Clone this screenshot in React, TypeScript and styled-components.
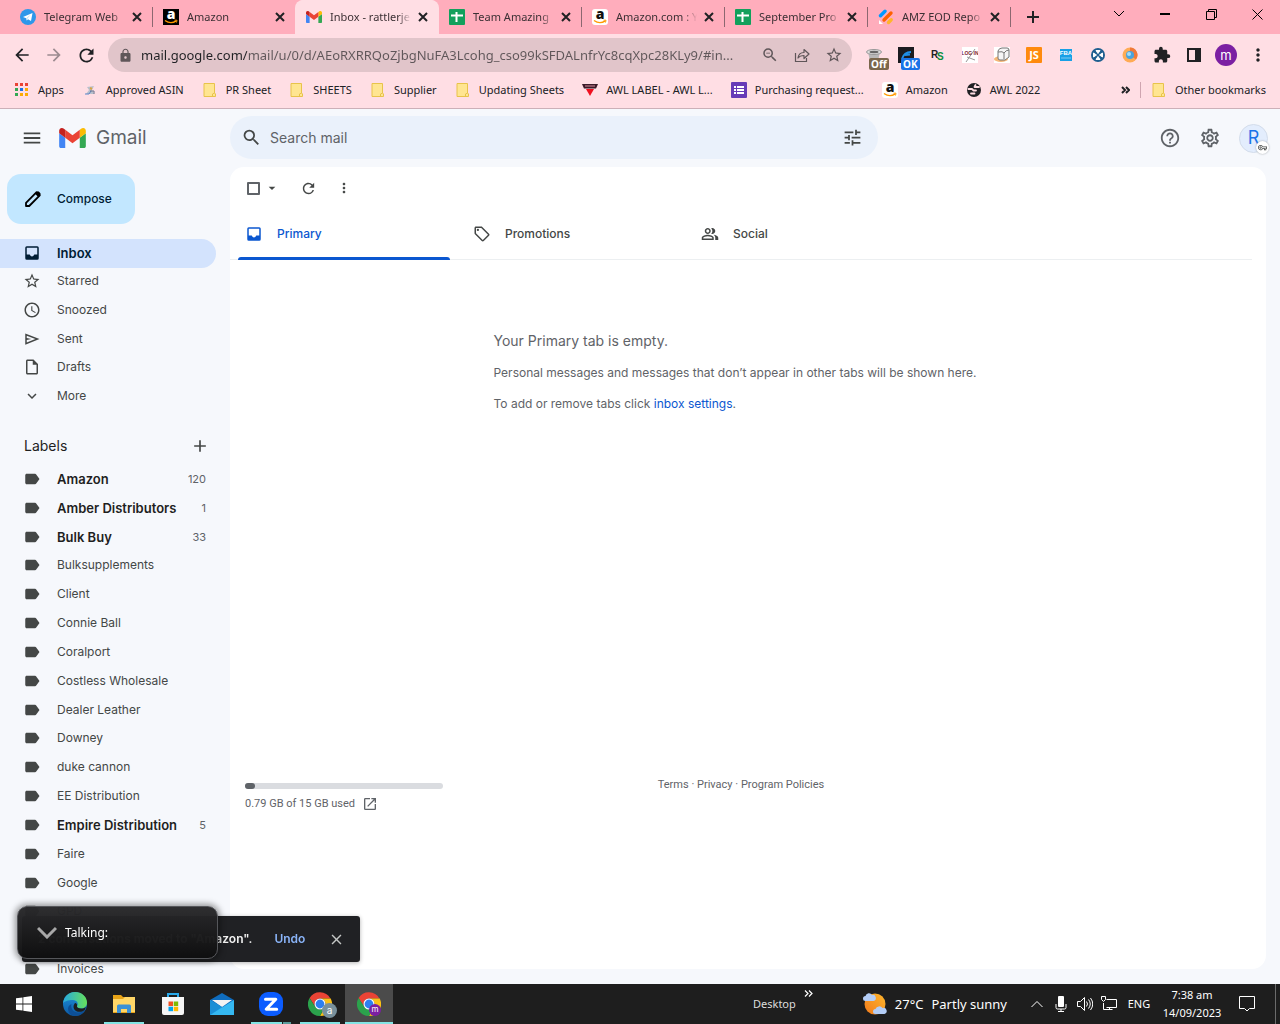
import React from "react";
import styled, { createGlobalStyle, css } from "styled-components";
import {
  MdAccessTime, MdAdd, MdArrowBack, MdArrowDropDown, MdArrowForward, MdClose, MdExpandMore,
  MdExtension, MdHelpOutline, MdLock, MdMenu, MdMoreVert, MdOpenInNew,
  MdOutlineInsertDriveFile, MdOutlineLocalOffer, MdOutlinePeopleAlt,
  MdOutlineSettings, MdOutlineVpnKey, MdRefresh, MdSearch, MdStarBorder, MdTune, MdZoomOut,
} from "react-icons/md";

const ui = `"Noto Sans", "Open Sans", sans-serif`;
const mail = `Inter, Roboto, sans-serif`;

const GlobalStyle = createGlobalStyle`
  *, *::before, *::after { box-sizing: border-box; }
  body { margin: 0; background: #f6f8fc; font-family: ${mail}; }
  button { border: 0; margin: 0; padding: 0; background: none; font: inherit; color: inherit; cursor: pointer; }
  a { color: inherit; text-decoration: none; }
  ul { list-style: none; margin: 0; padding: 0; }
  svg { display: block; flex: none; }
`;

const Page = styled.div`
  display: flex;
  flex-direction: column;
  min-height: 100vh;
`;

/* ---------- browser ---------- */

const TabStrip = styled.div`
  display: flex;
  height: 34px;
  padding-left: 10px;
  background: #ffadbc;
  font: 11px/16px ${ui};
  color: #3c3034;
`;

const Tab = styled.div<{ $active?: boolean }>`
  flex: 0 1 142px;
  min-width: 60px;
  display: flex;
  align-items: center;
  gap: 8px;
  padding: 0 7px 0 10px;
  ${(p) => p.$active && css`
    background: #ffdee4;
    border-radius: 8px 8px 0 0;
    box-shadow: -1px 0 #ffdee4, 1px 0 #ffdee4;
  `}
`;

const TabTitle = styled.button`
  flex: 1;
  min-width: 0;
  overflow: hidden;
  white-space: nowrap;
  text-align: left;
  mask-image: linear-gradient(to right, #000 84%, transparent);
`;

const TabClose = styled.button`
  display: grid;
  place-items: center;
  width: 16px;
  height: 16px;
  margin-left: -4px;
  color: #202124;
`;

const TabDivider = styled.span<{ $hidden?: boolean }>`
  width: 1px;
  height: 20px;
  align-self: center;
  background: ${(p) => (p.$hidden ? "transparent" : "#8c6770")};
`;

const NewTab = styled.button`
  display: grid;
  place-items: center;
  width: 28px;
  margin-left: 8px;
  color: #202124;
`;

const WindowControls = styled.div`
  display: flex;
  margin-left: auto;
`;

const WindowButton = styled.button`
  display: grid;
  place-items: center;
  width: 46px;
  height: 28px;
  color: #000;
`;

const Toolbar = styled.div`
  display: flex;
  align-items: center;
  height: 38px;
  padding: 4px 6px 0;
  background: #ffdee4;
  color: #202124;
`;

const ToolButton = styled.button<{ $muted?: boolean }>`
  position: relative;
  flex: none;
  display: grid;
  place-items: center;
  width: 32px;
  height: 32px;
  color: ${(p) => (p.$muted ? "#9c8b90" : "inherit")};
`;

const Omnibox = styled.div`
  flex: 1;
  min-width: 0;
  display: flex;
  align-items: center;
  height: 34px;
  margin: 0 6px;
  padding: 0 2px 0 10px;
  border-radius: 17px;
  background: #e1c5ca;
  color: #5f5659;
`;

const UrlInput = styled.input`
  flex: 1;
  min-width: 0;
  margin-left: 8px;
  padding: 0;
  border: 0;
  outline: 0;
  font: 13px/24px ${ui};
  color: transparent;
  background: linear-gradient(to right, #202124 106px, #5f5659 106px);
  background-clip: text;
`;

const Tag = styled.span<{ $color: string }>`
  position: absolute;
  left: 11px;
  bottom: 1px;
  padding: 0 2px;
  border-radius: 2px;
  background: ${(p) => p.$color};
  color: #fff;
  font: 700 10px/12px ${ui};
`;

const Profile = styled.span`
  display: grid;
  place-items: center;
  width: 22px;
  height: 22px;
  border-radius: 50%;
  background: #7b1fa2;
  color: #fff;
  font: 13px/20px ${mail};
`;

const Bookmarks = styled.nav`
  display: flex;
  align-items: center;
  gap: 18px;
  height: 37px;
  padding: 0 14px;
  border-bottom: 1px solid #ccb0b8;
  background: #ffdee4;
  color: #202124;
  font: 11px/16px ${ui};
  white-space: nowrap;
`;

const Bookmark = styled.a`
  display: flex;
  align-items: center;
  gap: 8px;
`;

const BookmarksEnd = styled.div`
  display: flex;
  align-items: center;
  gap: 10px;
  margin-left: auto;
`;

const EndDivider = styled.span`
  width: 1px;
  height: 16px;
  background: #cfa5b0;
`;

/* ---------- mail ---------- */

const Mail = styled.div`
  flex: 1;
  display: grid;
  grid-template-columns: 230px minmax(0, 1fr);
  grid-template-rows: 58px minmax(0, 1fr);
  background: #f6f8fc;
`;

const Brand = styled.div`
  display: flex;
  align-items: center;
  padding-left: 21px;
  color: #444746;
`;

const MenuButton = styled.button`
  margin-right: 16px;
`;

const Logo = styled.a`
  display: flex;
  align-items: center;
  gap: 10px;
  color: #5f6368;
  font: 19px/24px ${mail};
`;

const Header = styled.header`
  display: flex;
  align-items: center;
  padding-right: 12px;
  color: #5f6368;
`;

const SearchBox = styled.form`
  flex: 0 1 648px;
  display: flex;
  align-items: center;
  gap: 8px;
  height: 43px;
  margin: 0 auto 1px 0;
  padding: 0 15px 0 11px;
  border-radius: 22px;
  background: #eaf1fb;
  color: #444746;
`;

const SearchInput = styled.input`
  flex: 1;
  min-width: 0;
  padding: 0;
  border: 0;
  outline: 0;
  background: none;
  color: #444746;
  font: 14px/24px ${mail};
  &::placeholder { color: #5f6368; opacity: 1; }
`;

const HeaderButton = styled.button`
  display: grid;
  place-items: center;
  width: 40px;
  height: 40px;
`;

const Avatar = styled.button`
  position: relative;
  width: 29px;
  height: 29px;
  margin-left: 9px;
  border: 1px solid #d3dcea;
  border-radius: 50%;
  background: #e3edfd;
  color: #1a73e8;
  font: 18px/26px ${mail};
`;

const KeyBadge = styled.span`
  position: absolute;
  right: -2px;
  bottom: -2px;
  display: grid;
  place-items: center;
  width: 13px;
  height: 13px;
  border-radius: 50%;
  background: #fff;
  box-shadow: 0 0 2px #9aa0a6;
  color: #444746;
`;

const Sidebar = styled.aside`
  display: flex;
  flex-direction: column;
  min-width: 0;
  padding-top: 7px;
`;

const Compose = styled.button`
  display: flex;
  align-items: center;
  align-self: flex-start;
  gap: 14px;
  height: 50px;
  margin: 0 0 15px 7px;
  padding: 0 23px 0 16px;
  border-radius: 14px;
  background: #c2e7ff;
  color: #001d35;
  font: 500 12px/20px ${mail};
`;

const NavList = styled.ul`
  display: grid;
  grid-auto-rows: 1fr;
  height: 172px;
`;

const LabelList = styled.ul`
  flex: 1;
  display: grid;
  grid-auto-rows: minmax(28px, 1fr);
`;

const NavItem = styled.a<{ $active?: boolean; $bold?: boolean }>`
  display: flex;
  align-items: center;
  gap: 16px;
  height: 100%;
  margin-right: 14px;
  padding: 0 10px 1px 23px;
  border-radius: 0 15px 15px 0;
  background: ${(p) => (p.$active ? "#d3e3fd" : "none")};
  color: ${(p) => (p.$active ? "#001d35" : p.$bold ? "#1f1f1f" : "#444746")};
  font: ${(p) => (p.$active || p.$bold ? "600 13px" : "400 12px")}/18px ${mail};
  svg { color: ${(p) => (p.$active ? "#001d35" : "#444746")}; }
`;

const Count = styled.span`
  margin-left: auto;
  color: #5f6368;
  font: 400 11px/16px ${mail};
`;

const LabelsHead = styled.div`
  display: flex;
  align-items: center;
  justify-content: space-between;
  height: 54px;
  padding: 16px 20px 0 24px;
  color: #444746;
`;

const LabelsTitle = styled.h2`
  margin: 0;
  color: #1f1f1f;
  font: 400 14px/20px ${mail};
`;

const Card = styled.main`
  display: flex;
  flex-direction: column;
  margin: 0 14px 15px 0;
  padding-right: 14px;
  border-radius: 14px;
  background: #fff;
`;

const Actions = styled.div`
  display: flex;
  align-items: center;
  height: 42px;
  padding-left: 17px;
  color: #444746;
`;

const Checkbox = styled.input`
  appearance: none;
  width: 13px;
  height: 13px;
  margin: 0;
  border: 2px solid #5f6368;
  border-radius: 1px;
`;

const ActionButton = styled.button<{ $gap?: number }>`
  display: grid;
  place-items: center;
  width: 16px;
  height: 16px;
  margin-left: ${(p) => p.$gap || 4}px;
`;

const TabBar = styled.div`
  display: grid;
  grid-template-columns: repeat(3, minmax(0, 228px));
  height: 51px;
  border-bottom: 1px solid #eceff1;
`;

const Category = styled.button<{ $active?: boolean }>`
  position: relative;
  display: flex;
  align-items: center;
  gap: 14px;
  height: 51px;
  padding: 0 0 2px 15px;
  color: ${(p) => (p.$active ? "#0b57d0" : "#444746")};
  font: 500 12px/18px ${mail};
  &::after {
    content: "";
    display: ${(p) => (p.$active ? "block" : "none")};
    position: absolute;
    left: 8px;
    right: 8px;
    bottom: 0;
    height: 3px;
    border-radius: 3px 3px 0 0;
    background: #0b57d0;
  }
`;

const Empty = styled.section`
  align-self: center;
  padding: 69px 12px 0 0;
  color: #5f6368;
`;

const EmptyTitle = styled.h1`
  margin: 0 0 10px;
  font: 400 14px/24px ${mail};
`;

const EmptyText = styled.p`
  margin: 0 0 11px;
  font: 12px/20px ${mail};
  a { color: #0b57d0; }
`;

const Footer = styled.footer`
  display: grid;
  grid-template-columns: 1fr auto 1fr;
  margin: auto 0 157px;
  padding: 0 15px;
  color: #5f6368;
  font: 11px/16px Roboto, sans-serif;
`;

const Storage = styled.div`
  max-width: 198px;
  padding-top: 6px;
`;

const Meter = styled.div`
  height: 6px;
  border-radius: 3px;
  background: #dadce0;
`;

const MeterFill = styled.div`
  height: 6px;
  border-radius: 3px;
  background: #5f6368;
`;

const StorageText = styled.a`
  display: flex;
  align-items: center;
  gap: 7px;
  padding-top: 7px;
`;

/* ---------- overlays ---------- */

const Toast = styled.div`
  position: fixed;
  left: 22px;
  bottom: 62px;
  display: flex;
  align-items: center;
  height: 46px;
  padding: 0 15px 0 16px;
  border-radius: 3px;
  background: #202124;
  box-shadow: 0 1px 4px rgba(0, 0, 0, 0.3);
  color: #f2f2f2;
  font: 600 12px/18px ${mail};
`;

const ToastAction = styled.button`
  margin-left: 22px;
  color: #8ab4f8;
`;

const ToastClose = styled.button`
  margin-left: 23px;
  color: #c4c7c5;
`;

const Talking = styled.div`
  position: fixed;
  left: 17px;
  bottom: 65px;
  display: flex;
  align-items: center;
  gap: 8px;
  width: 201px;
  height: 53px;
  padding-left: 19px;
  border: 1px solid #55565a;
  border-radius: 10px;
  background: linear-gradient(rgba(42, 42, 44, 0.98), rgba(15, 15, 16, 0.98));
  box-shadow: 0 0 6px 2px rgba(0, 0, 0, 0.4);
  color: #fff;
  font: 12px/18px ${ui};
  svg { color: #a8a8a8; }
`;

/* ---------- taskbar ---------- */

const Taskbar = styled.div`
  display: flex;
  height: 40px;
  background: #1e1e1e;
  color: #fff;
  font: 11px/18px ${ui};
`;

const Apps = styled.div`
  display: flex;
  gap: 1px;
`;

const TaskButton = styled.button<{ $running?: boolean; $active?: boolean; $stacked?: boolean }>`
  position: relative;
  display: grid;
  place-items: center;
  width: 48px;
  background: ${(p) => (p.$active ? "#4b4b4b" : "none")};
  &:first-child { margin-right: 2px; }
  &::after {
    content: "";
    display: ${(p) => (p.$running || p.$active ? "block" : "none")};
    position: absolute;
    left: ${(p) => (p.$active ? 0 : 4)}px;
    right: ${(p) => (p.$active ? 0 : 4)}px;
    bottom: 0;
    height: 2px;
    background: ${(p) =>
      p.$stacked ? "linear-gradient(to right, #83e4e4 31px, #1e1e1e 31px 32px, #5a9c9c 32px)" : "#83e4e4"};
  }
`;

const AppBadge = styled.span<{ $color: string; $small?: boolean }>`
  position: absolute;
  right: ${(p) => (p.$small ? 12 : 7)}px;
  bottom: ${(p) => (p.$small ? 8 : 6)}px;
  width: ${(p) => (p.$small ? 12 : 15)}px;
  height: ${(p) => (p.$small ? 12 : 15)}px;
  border-radius: 50%;
  background: ${(p) => p.$color};
  color: #fff;
  font: ${(p) => (p.$small ? "8px/11px" : "10px/14px")} ${mail};
  text-align: center;
`;

const Tray = styled.div`
  display: flex;
  align-items: stretch;
  margin-left: auto;
`;

const DesktopButton = styled.button`
  display: flex;
  align-items: center;
  gap: 8px;
  margin-right: 50px;
  color: #ddd;
`;

const Chevrons = styled.svg`
  align-self: flex-start;
  margin-top: 6px;
`;

const Weather = styled.button`
  display: flex;
  align-items: center;
  gap: 8px;
  margin-right: 18px;
  font-size: 13px;
`;

const TrayItem = styled.button<{ $w: number }>`
  display: grid;
  place-content: center;
  width: ${(p) => p.$w}px;
  text-align: center;
`;

const ShowDesktop = styled.button`
  width: 5px;
  margin-left: 8px;
  border-left: 1px solid #6b6b6b;
`;

/* ---------- drawings ---------- */

const Glyph = ({ d }: { d: string }) => (
  <svg width="18" height="18" viewBox="0 0 24 24" fill="currentColor" fillRule="evenodd" aria-hidden>
    <path d={d} />
  </svg>
);

const InboxIcon = () => (
  <Glyph d="M5 3h14a2 2 0 0 1 2 2v14a2 2 0 0 1-2 2H5a2 2 0 0 1-2-2V5a2 2 0 0 1 2-2zm0 2v9h4q1 2.500 3 2.500t3-2.500h4V5z" />
);
const SentIcon = () => <Glyph d="M3 4.500v15l19-7.500zM5 7.500 16.500 12 5 16.500V13.300l6-1.300-6-1.300z" />;
const LabelIcon = () => (
  <Glyph d="M17.630 5.840C17.270 5.330 16.670 5 16 5H5c-1.100 0-2 .9-2 2v10c0 1.100.9 2 2 2h11c.670 0 1.270-.330 1.630-.840L22 12z" />
);

const GmailMark = ({ size }: { size: number }) => (
  <svg width={size} height={Math.round(size * 0.75)} viewBox="52 42 88 66" aria-hidden>
    <path fill="#4285f4" d="M58 108h14V74L52 59v43c0 3.32 2.69 6 6 6" />
    <path fill="#34a853" d="M120 108h14c3.32 0 6-2.69 6-6V59l-20 15" />
    <path fill="#fbbc04" d="M120 48v26l20-15v-8c0-7.42-8.47-11.65-14.4-7.2" />
    <path fill="#ea4335" d="M72 74V48l24 18 24-18v26L96 92" />
    <path fill="#c5221f" d="M52 51v8l20 15V48l-5.6-4.2c-5.94-4.45-14.4-.22-14.4 7.2" />
  </svg>
);

const Telegram = () => (
  <svg width="16" height="16" viewBox="0 0 16 16" aria-hidden>
    <circle cx="8" cy="8" r="8" fill="#2e97ea" />
    <path d="M3 8 12.5 4 11 12 8 10.2 6.8 11.6 6.2 9.2Z" fill="#fff" />
    <path d="m6.2 9.2 4.3-3.4-3 3.7-.7 2.1Z" fill="#b9dcf8" />
  </svg>
);

const AmazonMark = ({ dark }: { dark?: boolean }) => (
  <svg width="16" height="16" viewBox="0 0 16 16" aria-hidden>
    <rect width="16" height="16" rx={dark ? 0 : 3} fill={dark ? "#000" : "#fff"} />
    <text x="8" y="10" textAnchor="middle" fontFamily="Open Sans, sans-serif" fontWeight="800" fontSize="14" fill={dark ? "#fff" : "#111"}>a</text>
    <path d="M2 11.5q5.5 4 11 .6" fill="none" stroke="#f90" strokeWidth="1.4" />
    <path d="M11.5 11.2h2.5l-.5 2.3" fill="none" stroke="#f90" strokeWidth="1" />
  </svg>
);

const Sheets = () => (
  <svg width="16" height="16" viewBox="0 0 16 16" aria-hidden>
    <rect width="16" height="16" rx="1" fill="#12a05c" />
    <path d="M2 5.5h12v2H8.5V13h-2V7.5H2zM6.500 3h2v3h-2z" fill="#fff" />
  </svg>
);

const Jotform = () => (
  <svg width="16" height="16" viewBox="0 0 16 16" aria-hidden>
    <g fill="none" strokeLinecap="round" strokeWidth="3.400">
      <path d="M2.500 6.800 7 2.300" stroke="#0099ff" />
      <path d="m6 11 7-7" stroke="#ff6100" />
      <path d="m10.500 13.500 2.700-2.700" stroke="#ffb629" />
    </g>
    <path d="M1 11v4h4z" fill="#fff" />
  </svg>
);

const Folder = () => (
  <svg width="16" height="16" viewBox="0 0 16 16" aria-hidden>
    <path d="M2 1.500h10.500v9.500l1 1v2.500H2z" fill="#ffe591" stroke="#e8c34a" />
    <path d="M10.500 14.500V12l2-1" fill="none" stroke="#e8c34a" />
  </svg>
);

const AppsGrid = () => (
  <svg width="16" height="16" viewBox="0 0 16 16" aria-hidden>
    {["#ea4335", "#ea4335", "#ea4335", "#34a853", "#1a73e8", "#fbab04", "#34a853", "#fbab04", "#fbab04"].map((c, i) => (
      <rect key={i} x={1 + (i % 3) * 5} y={1 + Math.floor(i / 3) * 5} width="3" height="3" fill={c} />
    ))}
  </svg>
);

const Asin = () => (
  <svg width="16" height="16" viewBox="0 0 16 16" aria-hidden>
    <path d="m5 5 7-1-2 4 2 4H4l3-4z" fill="#b9c0cc" />
    <path d="M3 12h4l2-3" fill="none" stroke="#5a86c8" />
    <path d="m8 6 2 1" stroke="#d9a441" strokeWidth="2" />
    <path d="M8 9h4v3" fill="none" stroke="#66718a" />
  </svg>
);

const Awl = () => (
  <svg width="16" height="16" viewBox="0 0 16 16" aria-hidden>
    <path d="M0 2h16l-2 4.500H2z" fill="#3b1a28" />
    <path d="M3 4h10" stroke="#d88a9a" />
    <path d="M4 7h8l-4 7z" fill="#f01020" />
  </svg>
);

const Forms = () => (
  <svg width="16" height="16" viewBox="0 0 16 16" aria-hidden>
    <rect width="16" height="16" rx="1" fill="#673ab7" />
    <path d="M3 4h2v2H3zM3 7h2v2H3zM3 10h2v2H3zM6 4h7v2H6zM6 7h7v2H6zM6 10h7v2H6z" fill="#fff" />
  </svg>
);

const Globe = () => (
  <svg width="16" height="16" viewBox="0 0 16 16" aria-hidden>
    <circle cx="8" cy="8" r="7" fill="#202124" />
    <path d="M2.500 7h3.500l1.500 1.500h2.500M9.500 3 8.500 5H13M5 11.500h3.500" fill="none" stroke="#ffdee4" strokeWidth="1.800" strokeLinecap="round" strokeLinejoin="round" />
  </svg>
);

const Share = () => (
  <svg width="16" height="16" viewBox="0 0 16 16" fill="none" stroke="currentColor" strokeWidth="1.200" aria-hidden>
    <path d="M1.500 6v8.500h11V11" />
    <path d="M4 11c.5-4 3-5.500 6-5.500V2.500l5 4.500-5 4.500v-3C7.500 8.500 5.500 9 4 11Z" strokeLinejoin="round" />
  </svg>
);

const Bucket = () => (
  <svg width="16" height="16" viewBox="0 0 16 16" aria-hidden>
    <path d="M2 5h12l-2 9H4z" fill="#b8b8b8" />
    <ellipse cx="8" cy="5" rx="7.500" ry="2.500" fill="#ddd" stroke="#999" />
    <ellipse cx="8" cy="5" rx="4.500" ry="1.200" fill="#666" />
  </svg>
);

const DarkE = () => (
  <svg width="16" height="16" viewBox="0 0 16 16" aria-hidden>
    <rect width="16" height="16" fill="#1b1b20" />
    <path d="M4 12q2-7 9-7M7 8l5-.5" fill="none" stroke="#1f8fe8" strokeWidth="2" />
  </svg>
);

const RevSeller = () => (
  <svg width="16" height="16" viewBox="0 0 16 16" fontFamily="Liberation Sans, sans-serif" fontWeight="700" aria-hidden>
    <text x="1" y="11" fontSize="10" fill="#222">R</text>
    <text x="7" y="13" fontSize="10" fill="#0a8f3c">S</text>
  </svg>
);

const LogIn = () => (
  <svg width="16" height="16" viewBox="0 0 16 16" aria-hidden>
    <rect width="16" height="16" fill="#fff" />
    <path d="m4 15 9-13M5 10l8 3" stroke="#999" />
    <text x="8" y="8" textAnchor="middle" fontSize="5" fontWeight="700" fontFamily="Liberation Sans, sans-serif" fill="#7b2330">LOG IN</text>
  </svg>
);

const Box = () => (
  <svg width="16" height="16" viewBox="0 0 16 16" aria-hidden>
    <rect width="16" height="16" fill="#fff" />
    <ellipse cx="7" cy="12" rx="7" ry="3" fill="#f4b777" />
    <path d="M4 4q1-3 4-3h5q2 0 2 2v7l-4 3H6q-2 0-2-2z" fill="#f6f6f6" stroke="#777" />
    <path d="M4 5q5-1 6 1v6M10 6q2-3 5-3" fill="none" stroke="#777" />
  </svg>
);

const Scout = () => (
  <svg width="16" height="16" viewBox="0 0 16 16" aria-hidden>
    <rect width="16" height="16" rx="1" fill="#ff8a0d" />
    <text x="8" y="12" textAnchor="middle" fontSize="11" fontWeight="700" fontFamily="Noto Sans, sans-serif" fill="#fff">JS</text>
  </svg>
);

const Fba = () => (
  <svg width="16" height="16" viewBox="0 0 16 16" aria-hidden>
    <rect x="2" y="2" width="12" height="12" fill="#17a0e6" />
    <text x="8" y="8" textAnchor="middle" fontSize="6" fontWeight="700" fontFamily="Liberation Sans, sans-serif" fill="#fff">FBA</text>
    <path d="M3 11h10" stroke="#7fcaf0" />
  </svg>
);

const BlueCross = () => (
  <svg width="16" height="16" viewBox="0 0 16 16" aria-hidden>
    <circle cx="8" cy="8" r="7" fill="#1f5f8f" />
    <path d="M6 3.500h4L8 6.500zM6 12.500h4L8 9.500zM3.500 6v4l3-2zM12.500 6v4l-3-2z" fill="#fff" stroke="#fff" strokeLinejoin="round" />
  </svg>
);

const Fox = () => (
  <svg width="16" height="16" viewBox="0 0 16 16" aria-hidden>
    <circle cx="8" cy="8" r="7.500" fill="#ffab55" />
    <path d="M8 .5a7.500 7.500 0 0 1 6 12L8 8z" fill="#f0793a" />
    <circle cx="8" cy="8" r="4" fill="#4aa3dd" />
    <circle cx="7" cy="7" r="2" fill="#a9dcf5" />
  </svg>
);

const SidePanel = () => (
  <svg width="16" height="16" viewBox="0 0 16 16" aria-hidden>
    <path d="M1 1h14v14H1zm2 2v10h6V3z" fillRule="evenodd" fill="#202124" />
  </svg>
);

const Pencil = () => (
  <svg width="20" height="20" viewBox="0 0 20 20" aria-hidden>
    <path d="M3 17v-3.200L13.600 3.200l3.200 3.200L6.200 17z" fill="none" stroke="#000" strokeWidth="1.800" strokeLinejoin="round" />
    <path d="m12 4.800 2-2q1-1 2 0l1.200 1.200q1 1 0 2l-2 2z" fill="#000" />
  </svg>
);

const Windows = () => (
  <svg width="16" height="16" viewBox="0 0 16 16" fill="#fff" aria-hidden>
    <path d="M0 2.300 6.500 1.400v6.200H0zM7.300 1.300 16 0v7.600H7.300zM0 8.400h6.500v6.200L0 13.700zM7.300 8.400H16V16l-8.700-1.300z" />
  </svg>
);

const Edge = () => (
  <svg width="24" height="24" viewBox="0 0 24 24" aria-hidden>
    <defs>
      <linearGradient id="edgeTop" x1="0" x2="1"><stop stopColor="#27a9e0" /><stop offset="1" stopColor="#66e05a" /></linearGradient>
      <linearGradient id="edgeLow" x1="0" x2="0" y1="0" y2="1"><stop stopColor="#1f93dd" /><stop offset="1" stopColor="#0c59a4" /></linearGradient>
    </defs>
    <circle cx="12" cy="12" r="12" fill="url(#edgeLow)" />
    <path d="M0 11.500C1 4 6 0 12 0c7 0 12 5 12 10.500 0 4-3 6-6 6-2.500 0-4.500-1-4-2.500 2-2 0-6-4-6-5 0-9 1.500-10 3.500Z" fill="url(#edgeTop)" />
    <path d="M8.500 12c-1.500 5 3 9 7.500 8.500 3-.5 5-1.500 6.500-3.500-2 6-9 8-13 6.500C4 21 3.500 14 8.500 12Z" fill="#0d4f96" />
    <path d="M14 14c-.5 1.500 1.500 2.500 4 2.500 2 0 3.500-.6 4.800-1.600L22 17.500c-2 2.500-6 3-9 1.500-2.500-1.500-3.500-5-1-8 1.500 0 2.500 1.500 2 3Z" fill="#1e1e1e" />
  </svg>
);

const Explorer = () => (
  <svg width="22" height="20" viewBox="0 0 22 20" aria-hidden>
    <path d="M0 1h8l2 2h12v16H0z" fill="#e8a317" />
    <path d="M0 5h10l2-2h10v15H0z" fill="#ffd667" />
    <path d="M4 19v-7q0-1.500 1.500-1.500h11Q18 10.500 18 12v7h-4v-4H8v4z" fill="#3a90d6" />
  </svg>
);

const Store = () => (
  <svg width="24" height="24" viewBox="0 0 24 24" aria-hidden>
    <path d="M7 5V2h10v3" fill="none" stroke="#29a9ea" strokeWidth="2" />
    <path d="M1 5h22v16q0 2-2 2H3q-2 0-2-2z" fill="#f5f5f5" />
    <path d="M7.500 9.500H12V14H7.500z" fill="#f25022" /><path d="M12.700 9.500h4.500V14h-4.500z" fill="#7fba00" />
    <path d="M7.500 14.700H12v4.500H7.500z" fill="#00a4ef" /><path d="M12.700 14.700h4.500v4.500h-4.500z" fill="#ffb900" />
  </svg>
);

const MailApp = () => (
  <svg width="24" height="24" viewBox="0 0 24 24" aria-hidden>
    <path d="M0 8 12 1l12 7v15H0z" fill="#0f6cbd" />
    <path d="M2 8h20l-10 7z" fill="#f3f3f3" />
    <path d="M0 8v15h24z" fill="#1fa1e6" /><path d="M24 8v15H0z" fill="#35b8f1" />
    <path d="M0 8v15L12 15z" fill="#1b8fd6" />
  </svg>
);

const Zoom = () => (
  <svg width="24" height="24" viewBox="0 0 24 24" aria-hidden>
    <rect width="24" height="24" rx="9" fill="#0b5cff" />
    <path d="M6.500 7.200h10.300L7.200 17.200h10.500" fill="none" stroke="#fff" strokeWidth="3" strokeLinejoin="round" strokeLinecap="round" />
  </svg>
);

const Chrome = () => (
  <svg width="24" height="24" viewBox="0 0 24 24" aria-hidden>
    <path d="M12 6.500h10.400A12 12 0 0 0 1.600 6l5.600 8.750A5.500 5.500 0 0 1 12 6.500Z" fill="#ea4335" />
    <path d="M22.400 6A12 12 0 0 1 12 24l4.800-9.250A5.500 5.500 0 0 0 12 6.500h10.400Z" fill="#fbc116" />
    <path d="M1.600 6A12 12 0 0 0 12 24l4.800-9.250a5.500 5.500 0 0 1-9.600 0Z" fill="#2ba24c" />
    <circle cx="12" cy="12" r="5.500" fill="#fff" /><circle cx="12" cy="12" r="4.400" fill="#2d7ff0" />
  </svg>
);

const Sun = () => (
  <svg width="24" height="24" viewBox="0 0 24 24" aria-hidden>
    <defs><linearGradient id="sun" x1="0" x2="1" y1="1" y2="0"><stop stopColor="#f27a1c" /><stop offset="1" stopColor="#fdb72c" /></linearGradient></defs>
    <circle cx="12" cy="12" r="10.500" fill="url(#sun)" />
    <path d="M2.500 9a2.500 2.500 0 0 1 0-5A3.500 3.500 0 0 1 9 3a3 3 0 0 1 1.500 6z" fill="#b3cdf6" />
    <path d="M12.500 22a2.500 2.500 0 0 1 0-5 4 4 0 0 1 7-1 3 3 0 0 1 2 6z" fill="#b3cdf6" />
  </svg>
);

const Line = ({ d, w = 16, h = 16, sw = 1 }: { d: string; w?: number; h?: number; sw?: number }) => (
  <svg width={w} height={h} viewBox={`0 0 ${w} ${h}`} fill="none" stroke="currentColor" strokeWidth={sw} aria-hidden>
    <path d={d} />
  </svg>
);

const Tick = () => <Line w={10} h={10} sw={2} d="m1 1 8 8M9 1 1 9" />;

/* ---------- data ---------- */

const tabs = [
  { title: "Telegram Web", icon: <Telegram /> },
  { title: "Amazon", icon: <AmazonMark dark /> },
  { title: "Inbox - rattlerje", icon: <GmailMark size={16} />, active: true },
  { title: "Team Amazing", icon: <Sheets /> },
  { title: "Amazon.com : Y", icon: <AmazonMark /> },
  { title: "September Pro", icon: <Sheets /> },
  { title: "AMZ EOD Repo", icon: <Jotform /> },
];

const extensions = [
  { name: "Off", icon: <Bucket />, tag: "Off", color: "#7a664b" },
  { name: "OK", icon: <DarkE />, tag: "OK", color: "#1a73e8" },
  { name: "RevSeller", icon: <RevSeller /> },
  { name: "Log in", icon: <LogIn /> },
  { name: "Package", icon: <Box /> },
  { name: "JS", icon: <Scout /> },
  { name: "FBA", icon: <Fba /> },
  { name: "Cross", icon: <BlueCross /> },
  { name: "Fox", icon: <Fox /> },
  { name: "Extensions", icon: <MdExtension size={18} /> },
  { name: "Side panel", icon: <SidePanel /> },
  { name: "Profile", icon: <Profile>m</Profile> },
  { name: "Menu", icon: <MdMoreVert size={20} /> },
];

const bookmarks = [
  { name: "Apps", icon: <AppsGrid /> },
  { name: "Approved ASIN", icon: <Asin /> },
  { name: "PR Sheet", icon: <Folder /> },
  { name: "SHEETS", icon: <Folder /> },
  { name: "Supplier", icon: <Folder /> },
  { name: "Updating Sheets", icon: <Folder /> },
  { name: "AWL LABEL - AWL L...", icon: <Awl /> },
  { name: "Purchasing request...", icon: <Forms /> },
  { name: "Amazon", icon: <AmazonMark /> },
  { name: "AWL 2022", icon: <Globe /> },
];

const folders = [
  { name: "Inbox", icon: <InboxIcon />, active: true },
  { name: "Starred", icon: <MdStarBorder size={18} /> },
  { name: "Snoozed", icon: <MdAccessTime size={18} /> },
  { name: "Sent", icon: <SentIcon /> },
  { name: "Drafts", icon: <MdOutlineInsertDriveFile size={18} /> },
  { name: "More", icon: <MdExpandMore size={18} /> },
];

const labels: { name: string; count?: number }[] = [
  { name: "Amazon", count: 120 }, { name: "Amber Distributors", count: 1 }, { name: "Bulk Buy", count: 33 },
  { name: "Bulksupplements" }, { name: "Client" }, { name: "Connie Ball" }, { name: "Coralport" },
  { name: "Costless Wholesale" }, { name: "Dealer Leather" }, { name: "Downey" }, { name: "duke cannon" },
  { name: "EE Distribution" }, { name: "Empire Distribution", count: 5 }, { name: "Faire" }, { name: "Google" },
  { name: "GPD" }, { name: "" }, { name: "Invoices" },
];

export default function App() {
  return (
    <Page>
      <GlobalStyle />
      <TabStrip>
        {tabs.map((t, i) => (
          <React.Fragment key={t.title}>
            <Tab $active={t.active}>
              {t.icon}
              <TabTitle>{t.title}</TabTitle>
              <TabClose aria-label="Close tab"><Tick /></TabClose>
            </Tab>
            <TabDivider $hidden={t.active || tabs[i + 1]?.active} />
          </React.Fragment>
        ))}
        <NewTab aria-label="New tab"><Line w={12} h={12} sw={2} d="M6 0v12M0 6h12" /></NewTab>
        <WindowControls>
          <WindowButton aria-label="Search tabs"><Line w={12} h={8} d="m1 1 5 5 5-5" /></WindowButton>
          <WindowButton aria-label="Minimize"><Line w={10} h={2} sw={2} d="M0 1h10" /></WindowButton>
          <WindowButton aria-label="Restore"><Line w={11} h={11} d="M.5 2.500h8v8h-8zM2.500 2.500v-2h8v8h-2" /></WindowButton>
          <WindowButton aria-label="Close"><Line w={11} h={11} d="m.5.5 10 10M10.500.5l-10 10" /></WindowButton>
        </WindowControls>
      </TabStrip>

      <Toolbar>
        <ToolButton aria-label="Back"><MdArrowBack size={20} /></ToolButton>
        <ToolButton aria-label="Forward" $muted><MdArrowForward size={20} /></ToolButton>
        <ToolButton aria-label="Reload"><MdRefresh size={21} /></ToolButton>
        <Omnibox>
          <MdLock size={15} />
          <UrlInput aria-label="Address" defaultValue="mail.google.com/mail/u/0/d/AEoRXRRQoZjbgNuFA3Lcohg_cso99kSFDALnfrYc8cqXpc28KLy9/#in..." />
          <ToolButton aria-label="Zoom out"><MdZoomOut size={18} /></ToolButton>
          <ToolButton aria-label="Share"><Share /></ToolButton>
          <ToolButton aria-label="Bookmark"><MdStarBorder size={18} /></ToolButton>
        </Omnibox>
        {extensions.map((e) => (
          <ToolButton key={e.name} aria-label={e.name}>
            {e.icon}
            {e.tag && <Tag $color={e.color!}>{e.tag}</Tag>}
          </ToolButton>
        ))}
      </Toolbar>

      <Bookmarks>
        {bookmarks.map((b) => (
          <Bookmark key={b.name} href="#">{b.icon}{b.name}</Bookmark>
        ))}
        <BookmarksEnd>
          <Line w={9} h={8} sw={2} d="m1 1 3 3-3 3M5 1l3 3-3 3" />
          <EndDivider />
          <Bookmark href="#"><Folder />Other bookmarks</Bookmark>
        </BookmarksEnd>
      </Bookmarks>

      <Mail>
        <Brand>
          <MenuButton aria-label="Main menu"><MdMenu size={22} /></MenuButton>
          <Logo href="#"><GmailMark size={27} />Gmail</Logo>
        </Brand>
        <Header>
          <SearchBox>
            <MdSearch size={21} />
            <SearchInput aria-label="Search mail" placeholder="Search mail" />
            <MdTune size={21} />
          </SearchBox>
          <HeaderButton aria-label="Support"><MdHelpOutline size={22} /></HeaderButton>
          <HeaderButton aria-label="Settings"><MdOutlineSettings size={22} /></HeaderButton>
          <Avatar aria-label="Account">R<KeyBadge><MdOutlineVpnKey size={9} /></KeyBadge></Avatar>
        </Header>

        <Sidebar>
          <Compose><Pencil />Compose</Compose>
          <NavList>
            {folders.map((f) => (
              <li key={f.name}><NavItem href="#" $active={f.active}>{f.icon}{f.name}</NavItem></li>
            ))}
          </NavList>
          <LabelsHead>
            <LabelsTitle>Labels</LabelsTitle>
            <button aria-label="Create label"><MdAdd size={20} /></button>
          </LabelsHead>
          <LabelList>
            {labels.map((l, i) => (
              <li key={i}>
                {l.name && (
                  <NavItem href="#" $bold={!!l.count}>
                    <LabelIcon />{l.name}{l.count && <Count>{l.count}</Count>}
                  </NavItem>
                )}
              </li>
            ))}
          </LabelList>
        </Sidebar>

        <Card>
          <Actions>
            <Checkbox type="checkbox" aria-label="Select all" />
            <ActionButton aria-label="Select"><MdArrowDropDown size={16} /></ActionButton>
            <ActionButton $gap={20} aria-label="Refresh"><MdRefresh size={17} /></ActionButton>
            <ActionButton $gap={20} aria-label="More"><MdMoreVert size={16} /></ActionButton>
          </Actions>
          <TabBar>
            <Category $active><InboxIcon />Primary</Category>
            <Category><MdOutlineLocalOffer size={18} />Promotions</Category>
            <Category><MdOutlinePeopleAlt size={18} />Social</Category>
          </TabBar>
          <Empty>
            <EmptyTitle>Your Primary tab is empty.</EmptyTitle>
            <EmptyText>Personal messages and messages that don’t appear in other tabs will be shown here.</EmptyText>
            <EmptyText>To add or remove tabs click <a href="#">inbox settings</a>.</EmptyText>
          </Empty>
          <Footer>
            <Storage>
              <Meter><MeterFill style={{ width: `${(0.79 / 15) * 100}%` }} /></Meter>
              <StorageText href="#">0.79 GB of 15 GB used<MdOpenInNew size={16} /></StorageText>
            </Storage>
            <div><a href="#">Terms</a> · <a href="#">Privacy</a> · <a href="#">Program Policies</a></div>
          </Footer>
        </Card>
      </Mail>

      <Toast role="status">
        2 conversations moved to "Amazon".
        <ToastAction>Undo</ToastAction>
        <ToastClose aria-label="Dismiss"><MdClose size={17} /></ToastClose>
      </Toast>
      <Talking>
        <Line w={20} h={13} sw={3} d="m1 2 9 9 9-9" />
        Talking:
      </Talking>

      <Taskbar>
        <Apps>
          <TaskButton aria-label="Start"><Windows /></TaskButton>
          <TaskButton aria-label="Edge"><Edge /></TaskButton>
          <TaskButton aria-label="File Explorer" $running><Explorer /></TaskButton>
          <TaskButton aria-label="Store"><Store /></TaskButton>
          <TaskButton aria-label="Mail"><MailApp /></TaskButton>
          <TaskButton aria-label="Zoom" $running $stacked><Zoom /></TaskButton>
          <TaskButton aria-label="Chrome, profile a" $running><Chrome /><AppBadge $color="#78909c">a</AppBadge></TaskButton>
          <TaskButton aria-label="Chrome, profile m" $active><Chrome /><AppBadge $color="#7b1fa2" $small>m</AppBadge></TaskButton>
        </Apps>
        <Tray>
          <DesktopButton>
            Desktop
            <Chevrons width="9" height="7" viewBox="0 0 9 7" fill="none" stroke="#fff" strokeWidth="1.200"><path d="m1 .5 3 3-3 3M5 .5l3 3-3 3" /></Chevrons>
          </DesktopButton>
          <Weather><Sun /><span>27°C</span><span>Partly sunny</span></Weather>
          <TrayItem $w={24} aria-label="Hidden icons"><Line w={12} h={8} d="m.5 7 5.500-5.500L11.500 7" /></TrayItem>
          <TrayItem $w={24} aria-label="Microphone">
            <svg width="12" height="16" viewBox="0 0 12 16" aria-hidden>
              <rect x="3" y="0" width="6" height="11" rx="1" fill="#fff" />
              <path d="M1 8v3.500q0 1.500 1.500 1.500h7q1.500 0 1.500-1.500V8M6 13v2M3 15.500h6" fill="none" stroke="#fff" />
            </svg>
          </TrayItem>
          <TrayItem $w={24} aria-label="Volume"><Line d="M.5 5.500h3l4-4v13l-4-4h-3zM9.500 5.500q2 2.500 0 5M11.500 3.500q3.500 4.500 0 9M13.500 2q4.500 6 0 12" /></TrayItem>
          <TrayItem $w={24} aria-label="Network"><Line d="M5.500 3.500h10v8h-10M2.500 7v6.500h9M8.500 11.500v2M.5.500h4v3l-2 2-2-2z" /></TrayItem>
          <TrayItem $w={36}>ENG</TrayItem>
          <TrayItem $w={70}><span>7:38 am</span><span>14/09/2023</span></TrayItem>
          <TrayItem $w={40} aria-label="Notifications"><Line w={16} h={16} d="M.5.500h15v12h-5L8 15l-2.500-2.500h-5z" /></TrayItem>
          <ShowDesktop aria-label="Show desktop" />
        </Tray>
      </Taskbar>
    </Page>
  );
}
